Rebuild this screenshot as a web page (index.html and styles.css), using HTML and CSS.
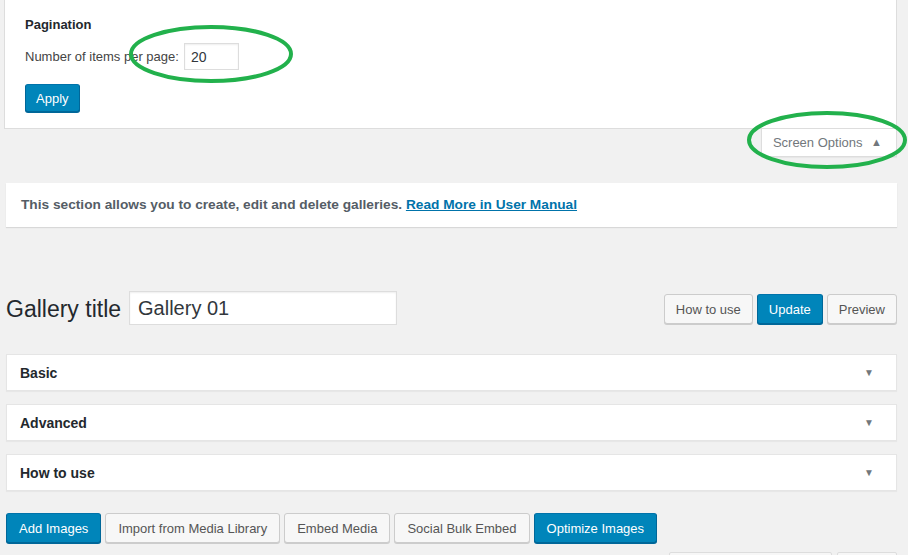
FILE: index.html
```html
<!DOCTYPE html>
<html lang="en">

<head>
  <meta charset="UTF-8">
  <title>Gallery</title>
  <link rel="stylesheet" href="styles.css">
</head>

<body>
  <div class="wrap">
    <div class="screen-meta">
      <h5>Pagination</h5>
      <div class="per-page">
        <label for="perPage">Number of items per page:</label>
        <input type="text" id="perPage" value="20">
      </div>
      <button class="button primary">Apply</button>
    </div>
    <div class="screen-tab-row">
      <div class="screen-tab">Screen Options <span class="up">&#9650;</span></div>
    </div>

    <div class="notice">
      This section allows you to create, edit and delete galleries.
      <a href="#">Read More in User Manual</a>
    </div>

    <div class="title-row">
      <h1>Gallery title</h1>
      <input type="text" class="title-input" value="Gallery 01">
      <div class="title-actions">
        <button class="button">How to use</button>
        <button class="button primary">Update</button>
        <button class="button">Preview</button>
      </div>
    </div>

    <div class="postboxes">
      <div class="postbox"><h2>Basic</h2><span class="toggle">&#9660;</span></div>
      <div class="postbox"><h2>Advanced</h2><span class="toggle">&#9660;</span></div>
      <div class="postbox"><h2>How to use</h2><span class="toggle">&#9660;</span></div>
    </div>

    <div class="media-actions">
      <button class="button primary">Add Images</button>
      <button class="button">Import from Media Library</button>
      <button class="button">Embed Media</button>
      <button class="button">Social Bulk Embed</button>
      <button class="button primary">Optimize Images</button>
    </div>

    <div class="bottom-row">
      <span class="stub wide"></span>
      <span class="stub"></span>
    </div>
  </div>

  <!-- green highlight marks drawn over the screenshot -->
  <svg class="marks" width="908" height="555">
    <ellipse cx="211" cy="54" rx="80" ry="27" />
    <ellipse cx="827" cy="140" rx="78" ry="27" />
  </svg>
</body>

</html>
```

FILE: styles.css
```css
body {
  margin: 0;
  background: #f1f1f1;
  font-family: "Liberation Sans", Arial, sans-serif;
  font-size: 13px;
  color: #23282d;
  overflow: hidden;
}

.wrap {
  padding: 0 11px 0 6px;
}

.screen-meta {
  margin-left: -2px;
  background: #fff;
  border: 1px solid #ddd;
  border-top: none;
  padding: 17px 20px 16px 20px;
  height: 95px;
}

.screen-meta h5 {
  margin: 0 0 10px;
  font-size: 13px;
  font-weight: 600;
  line-height: 16px;
}

.per-page {
  display: flex;
  align-items: center;
  gap: 5px;
  color: #444;
}

.per-page input {
  width: 55px;
  height: 27px;
  box-sizing: border-box;
  border: 1px solid #ddd;
  box-shadow: inset 0 1px 2px rgba(0,0,0,0.07);
  padding: 0 6px;
  font: inherit;
  font-size: 14px;
  color: #32373c;
}

.screen-meta .button {
  margin-top: 14px;
  height: 28px;
  padding: 0 10px;
}

.screen-tab-row {
  display: flex;
  justify-content: flex-end;
}

.screen-tab {
  background: #fff;
  border: 1px solid #ddd;
  border-top: none;
  box-shadow: 0 1px 1px rgba(0,0,0,0.04);
  color: #72777c;
  padding: 6px 14px 7px 11px;
  height: 14px;
  line-height: 14px;
}

.screen-tab .up {
  font-size: 11px;
  margin-left: 5px;
  vertical-align: 1px;
}

.notice {
  margin-top: 26px;
  background: #fff;
  box-shadow: 0 1px 1px rgba(0,0,0,0.1);
  padding: 14px 15px;
  font-weight: bold;
  font-size: 13.7px;
  color: #555d66;
  line-height: 16px;
}

.notice a {
  color: #0073aa;
}

.title-row {
  display: flex;
  align-items: center;
  margin-top: 64px;
}

.title-row h1 {
  margin: 2px 8px 0 0;
  font-size: 23px;
  font-weight: normal;
  color: #23282d;
}

.title-input {
  width: 268px;
  height: 34px;
  box-sizing: border-box;
  border: 1px solid #ddd;
  box-shadow: inset 0 1px 2px rgba(0,0,0,0.07);
  padding: 0 8px;
  font: inherit;
  font-size: 20px;
  color: #32373c;
}

.title-actions {
  margin-left: auto;
  display: flex;
  gap: 4px;
  padding-top: 2px;
}

.button {
  height: 30px;
  box-sizing: border-box;
  padding: 0 12px;
  font: inherit;
  font-size: 13px;
  color: #555;
  background: #f7f7f7;
  border: 1px solid #ccc;
  border-radius: 3px;
  box-shadow: 0 1px 0 #ccc;
}

.button.primary {
  background: #0085ba;
  border-color: #0073aa #006799 #006799;
  color: #fff;
  box-shadow: 0 1px 0 #006799;
}

.title-actions .button {
  padding: 0 11px;
}

.postboxes {
  margin-top: 29px;
}

.postbox {
  display: flex;
  justify-content: space-between;
  align-items: center;
  margin-bottom: 13px;
  height: 37px;
  box-sizing: border-box;
  background: #fff;
  border: 1px solid #e5e5e5;
  box-shadow: 0 1px 1px rgba(0,0,0,0.04);
  padding: 0 22px 0 13px;
}

.postbox h2 {
  margin: 0;
  font-size: 14px;
  font-weight: 600;
  color: #23282d;
}

.toggle {
  font-size: 10px;
  color: #72777c;
}

.media-actions {
  display: flex;
  gap: 4px;
  margin-top: 22px;
}

.bottom-row {
  display: flex;
  justify-content: flex-end;
  gap: 5px;
  margin-top: 9px;
}

.stub {
  width: 58px;
  height: 20px;
  border: 1px solid #ddd;
  border-radius: 2px;
  background: #f7f7f7;
}

.stub.wide {
  width: 161px;
}

.marks {
  position: absolute;
  left: 0;
  top: 0;
  pointer-events: none;
}

.marks ellipse {
  fill: none;
  stroke: #22b14c;
  stroke-width: 4;
}
```
